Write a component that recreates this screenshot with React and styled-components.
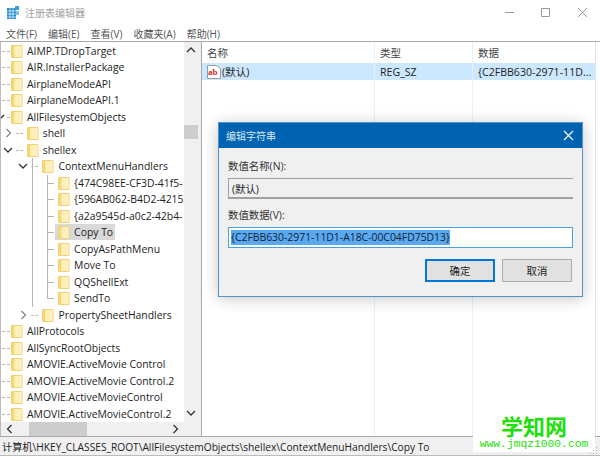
import React from "react";
import styled, { createGlobalStyle } from "styled-components";

const Global = createGlobalStyle`
  html, body {
    margin: 0;
    padding: 0;
    background: #fff;
  }
  body {
    width: 600px;
    height: 457px;
    overflow: hidden;
    font-family: "Open Sans", "Noto Sans CJK SC", sans-serif;
    font-size: 10.6px;
    color: #222;
  }
`;

const Page = styled.div`
  position: relative;
  width: 600px;
  height: 457px;
  overflow: hidden;
`;

const Window = styled.div`
  display: flex;
  flex-direction: column;
  height: 456px;
`;

const TitleBar = styled.div`
  height: 25px;
  display: flex;
  align-items: center;
  padding-left: 7px;
  gap: 5px;
  color: #a3a3a3;
  font-size: 10px;
`;

const Controls = styled.div`
  margin-left: auto;
  display: flex;
  align-items: center;
  gap: 27px;
  padding-right: 13px;
`;

const MenuBar = styled.div`
  height: 16px;
  display: flex;
  gap: 11px;
  padding-left: 6px;
  align-items: center;
  color: #555;
  font-size: 10px;
  border-bottom: 1px solid #a8a8a8;
`;

const Panes = styled.div`
  flex: 1;
  min-height: 0;
  display: flex;
  background: #f0f0f0;
  width: 596px;
`;

const TreePane = styled.div`
  width: 197px;
  display: grid;
  grid-template-columns: 183px 14px;
  grid-template-rows: 1fr 14px;
  background: #fff;
  border-right: 1px solid #a8a8a8;
  box-sizing: border-box;
  border-left: 1px solid #bbb;
`;

const TreeList = styled.div`
  padding-top: 0.5px;
  overflow: hidden;
  font-size: 10.4px;
`;

const Row = styled.div`
  position: relative;
  height: 16.5px;
  display: flex;
  align-items: center;
  padding-left: ${({ $depth }) => 10 + $depth * 15.7 - 3}px;
  white-space: nowrap;

  &::before {
    content: "";
    position: absolute;
    left: ${({ $depth }) => ($depth === 0 ? 1 : 15.7 * $depth - 1)}px;
    width: ${({ $depth }) => ($depth === 0 ? 8 : 7)}px;
    top: 8px;
    border-top: 1px ${({ $depth }) => ($depth === 3 ? "solid" : "dashed")} #b5b5b5;
  }
`;

const Node = styled.div`
  display: flex;
  align-items: center;
  gap: 4px;
  height: 16px;
  padding: 0 2px 0 3px;
  background: ${({ $selected }) => ($selected ? "#d9d9d9" : "transparent")};
`;

const Expander = styled.span`
  position: absolute;
  left: ${({ $depth }) => ($depth === 0 ? -6 : 15.7 * $depth - 14)}px;
  top: 3px;
  width: 10px;
  height: 10px;
  background: #fff;
  display: flex;
  align-items: center;
  justify-content: center;
`;

const Guide = styled.span`
  position: absolute;
  left: ${({ $x }) => $x}px;
  top: 0;
  bottom: ${({ $end }) => ($end ? "8px" : "0")};
  border-left: 1px solid #b5b5b5;
`;

const VScroll = styled.div`
  background: #f0f0f0;
  display: flex;
  flex-direction: column;
  align-items: center;
  justify-content: space-between;
  padding: 4px 0;
  position: relative;
`;

const VThumb = styled.div`
  position: absolute;
  left: 0;
  right: 0;
  top: 83px;
  height: 14px;
  background: #cdcdcd;
`;

const HScroll = styled.div`
  background: #f0f0f0;
  display: flex;
  align-items: center;
  justify-content: space-between;
  padding: 0 4px;
  position: relative;
`;

const HThumb = styled.div`
  position: absolute;
  left: 28px;
  top: 0;
  bottom: 0;
  width: 58px;
  background: #cdcdcd;
`;

const Corner = styled.div`
  background: #f0f0f0;
`;

const ListPane = styled.div`
  flex: 1;
  margin-left: 4px;
  background: #fff;
  border-left: 1px solid #a8a8a8;
  display: grid;
  grid-template-columns: 173px 98px 1fr;
  border-right: 1px solid #d9e6f2;
`;

const Column = styled.div`
  display: flex;
  flex-direction: column;
  border-right: ${({ $last }) => ($last ? "none" : "1px solid #e8f1fa")};
  min-width: 0;
`;

const ColumnHead = styled.div`
  height: 21px;
  display: flex;
  align-items: center;
  padding-left: 5px;
  color: #444;
  font-size: 10.5px;
`;

const Cell = styled.div`
  height: 17px;
  display: flex;
  align-items: center;
  gap: 1px;
  padding-left: 5px;
  background: #cce8ff;
  white-space: nowrap;
  overflow: hidden;
`;

const StatusBar = styled.div`
  height: 18px;
  display: flex;
  align-items: center;
  padding-left: 2px;
  background: #f0f0f0;
  border-top: 1px solid #a8a8a8;
  border-bottom: 1px solid #bbb;
  font-size: 10.2px;
  white-space: nowrap;
`;

const Dialog = styled.div`
  position: absolute;
  left: 218px;
  top: 122px;
  width: 365px;
  height: 175px;
  box-sizing: border-box;
  background: #f0f0f0;
  border: 1px solid #4f94cb;
  box-shadow: 0 2px 14px rgba(0, 0, 0, 0.22);
  display: flex;
  flex-direction: column;
`;

const DialogTitle = styled.div`
  height: 25px;
  background: #0063b1;
  color: #dbe8f4;
  display: flex;
  align-items: center;
  justify-content: space-between;
  padding: 0 8px 0 7px;
  font-size: 10px;
`;

const DialogBody = styled.div`
  padding: 10px 9px 0;
  display: flex;
  flex-direction: column;
`;

const FieldLabel = styled.div`
  height: 17px;
  line-height: 17px;
  font-size: 10.4px;
  color: #333;
`;

const NameInput = styled.div`
  height: 21px;
  margin: 3px 0 8px;
  box-sizing: border-box;
  border: 1px solid #a0a0a0;
  border-width: 1px 0 2px 1px;
  padding-left: 3px;
  display: flex;
  align-items: center;
  font-size: 10.4px;
`;

const ValueInput = styled.div`
  height: 21px;
  margin-top: 3px;
  box-sizing: border-box;
  border: 1px solid #4a9fe0;
  background: #fff;
  padding-left: 2px;
  display: flex;
  align-items: center;
  font-size: 10.4px;
`;

const Selection = styled.span`
  background: #5aa9f0;
  color: #123;
  line-height: 15px;
  white-space: nowrap;
`;

const Buttons = styled.div`
  display: flex;
  justify-content: flex-end;
  gap: 7px;
  margin-top: 11px;
  padding-right: 1px;
`;

const Button = styled.div`
  width: 70px;
  height: 23px;
  box-sizing: border-box;
  background: #e1e1e1;
  border: ${({ $primary }) => ($primary ? "2px solid #0078d7" : "1px solid #adadad")};
  display: flex;
  align-items: center;
  justify-content: center;
  font-size: 10.4px;
`;

const Watermark = styled.div`
  position: absolute;
  left: 473px;
  top: 407px;
  width: 122px;
  height: 45px;
  background: #fff;
  color: #1fe00c;
  display: flex;
  flex-direction: column;
  align-items: center;
  padding-top: 6px;
  box-sizing: border-box;
`;

const WatermarkName = styled.div`
  font-family: "Noto Sans CJK SC", sans-serif;
  font-weight: 700;
  font-size: 22px;
  line-height: 24px;
`;

const WatermarkUrl = styled.div`
  font-family: "Liberation Mono", monospace;
  font-size: 11.3px;
  line-height: 13px;
  margin-top: 1px;
`;

const Grip = styled.svg`
  position: absolute;
  left: 589px;
  top: 446px;
`;

const Folder = () => (
  <svg width="12" height="14" viewBox="0 0 12 14">
    <path d="M0.5 1.5h10.5v12H0.5z" fill="#fde7a0" stroke="#f3d273" />
    <path d="M1 2h2.5v11H1z" fill="#f8d671" />
    <path d="M3.5 2h7v11h-7z" fill="#fff0bd" />
  </svg>
);

const Chevron = ({ dir, color = "#555" }) => {
  const paths = {
    up: "M1 6l4-4 4 4",
    down: "M1 3l4 4 4-4",
    left: "M6.5 1l-4 4 4 4",
    right: "M3.5 1l4 4-4 4",
  };
  return (
    <svg width="10" height="10" viewBox="0 0 10 10">
      <path d={paths[dir]} fill="none" stroke={color} strokeWidth="1.3" />
    </svg>
  );
};

const RegIcon = () => (
  <svg width="13" height="13" viewBox="0 0 13 13">
    <path d="M0 2h9v11H0z" fill="#1b87c9" />
    <path d="M3 2v11M6 2v11M0 5h9M0 8h9M0 11h9" stroke="#fff" strokeWidth="0.7" />
    <path d="M8 0h4v4H8z" fill="#3aa0dc" />
    <path d="M9 5h3v4H9z" fill="#7cc4ea" />
  </svg>
);

const StringIcon = () => (
  <svg width="14" height="14" viewBox="0 0 14 14">
    <path d="M0.5 0.5h9l4 3v10h-13z" fill="#fff" stroke="#9a9a9a" />
    <text x="1" y="9.5" fontSize="9" fontWeight="700" fill="#cf2a1c" fontFamily="Liberation Serif, serif">
      ab
    </text>
  </svg>
);

const TREE = [
  { name: "AIMP.TDropTarget", depth: 0 },
  { name: "AIR.InstallerPackage", depth: 0 },
  { name: "AirplaneModeAPI", depth: 0 },
  { name: "AirplaneModeAPI.1", depth: 0 },
  { name: "AllFilesystemObjects", depth: 0, open: true },
  { name: "shell", depth: 1, closed: true },
  { name: "shellex", depth: 1, open: true },
  { name: "ContextMenuHandlers", depth: 2, open: true, guides: [32] },
  { name: "{474C98EE-CF3D-41f5-", depth: 3, guides: [32, 47] },
  { name: "{596AB062-B4D2-4215", depth: 3, guides: [32, 47] },
  { name: "{a2a9545d-a0c2-42b4-", depth: 3, guides: [32, 47] },
  { name: "Copy To", depth: 3, selected: true, guides: [32, 47] },
  { name: "CopyAsPathMenu", depth: 3, guides: [32, 47] },
  { name: "Move To", depth: 3, guides: [32, 47] },
  { name: "QQShellExt", depth: 3, guides: [32, 47] },
  { name: "SendTo", depth: 3, guides: [32, 47], last: true },
  { name: "PropertySheetHandlers", depth: 2, closed: true },
  { name: "AllProtocols", depth: 0 },
  { name: "AllSyncRootObjects", depth: 0 },
  { name: "AMOVIE.ActiveMovie Control", depth: 0 },
  { name: "AMOVIE.ActiveMovie Control.2", depth: 0 },
  { name: "AMOVIE.ActiveMovieControl", depth: 0 },
  { name: "AMOVIE.ActiveMovieControl.2", depth: 0 },
];

const VALUE = "{C2FBB630-2971-11D1-A18C-00C04FD75D13}";

export default function App() {
  return (
    <Page>
      <Global />
      <Window>
        <TitleBar>
          <RegIcon />
          注册表编辑器
          <Controls>
            <svg width="9" height="9" viewBox="0 0 9 9">
              <path d="M0 4.5h9" stroke="#999" />
            </svg>
            <svg width="10" height="10" viewBox="0 0 10 10">
              <path d="M0.5 0.5h8v8h-8z" fill="none" stroke="#999" />
            </svg>
            <svg width="9" height="9" viewBox="0 0 9 9">
              <path d="M0 0l9 9M9 0l-9 9" stroke="#999" />
            </svg>
          </Controls>
        </TitleBar>
        <MenuBar>
          <span>文件(F)</span>
          <span>编辑(E)</span>
          <span>查看(V)</span>
          <span>收藏夹(A)</span>
          <span>帮助(H)</span>
        </MenuBar>
        <Panes>
          <TreePane>
            <TreeList>
              {TREE.map((item) => (
                <Row key={item.name} $depth={item.depth}>
                  {item.guides &&
                    item.guides.map((x) => (
                      <Guide key={x} $x={x - 1} $end={item.last && x === 47} />
                    ))}
                  {(item.open || item.closed) && (
                    <Expander $depth={item.depth}>
                      <Chevron dir={item.open ? "down" : "right"} color={item.open ? "#333" : "#888"} />
                    </Expander>
                  )}
                  <Node $selected={item.selected}>
                    <Folder />
                    {item.name}
                  </Node>
                </Row>
              ))}
            </TreeList>
            <VScroll>
              <VThumb />
              <Chevron dir="up" color="#333" />
              <Chevron dir="down" color="#333" />
            </VScroll>
            <HScroll>
              <HThumb />
              <Chevron dir="left" color="#333" />
              <Chevron dir="right" color="#333" />
            </HScroll>
            <Corner />
          </TreePane>
          <ListPane>
            <Column>
              <ColumnHead>名称</ColumnHead>
              <Cell>
                <StringIcon />
                (默认)
              </Cell>
            </Column>
            <Column>
              <ColumnHead>类型</ColumnHead>
              <Cell>REG_SZ</Cell>
            </Column>
            <Column $last>
              <ColumnHead>数据</ColumnHead>
              <Cell>{"{C2FBB630-2971-11D..."}</Cell>
            </Column>
          </ListPane>
        </Panes>
        <StatusBar>计算机\HKEY_CLASSES_ROOT\AllFilesystemObjects\shellex\ContextMenuHandlers\Copy To</StatusBar>
      </Window>

      <Dialog>
        <DialogTitle>
          编辑字符串
          <svg width="11" height="11" viewBox="0 0 11 11">
            <path d="M1 1l9 9M10 1l-9 9" stroke="#fff" strokeWidth="1.1" />
          </svg>
        </DialogTitle>
        <DialogBody>
          <FieldLabel>数值名称(N):</FieldLabel>
          <NameInput>(默认)</NameInput>
          <FieldLabel>数值数据(V):</FieldLabel>
          <ValueInput>
            <Selection>{VALUE}</Selection>
          </ValueInput>
          <Buttons>
            <Button $primary>确定</Button>
            <Button>取消</Button>
          </Buttons>
        </DialogBody>
      </Dialog>

      <Watermark>
        <WatermarkName>学知网</WatermarkName>
        <WatermarkUrl>www.jmqz1000.com</WatermarkUrl>
      </Watermark>
      <Grip width="9" height="9" viewBox="0 0 9 9">
        <path d="M7 1h1v1H7zM4 4h1v1H4zM7 4h1v1H7zM1 7h1v1H1zM4 7h1v1H4zM7 7h1v1H7z" fill="#b0b0b0" />
      </Grip>
    </Page>
  );
}
